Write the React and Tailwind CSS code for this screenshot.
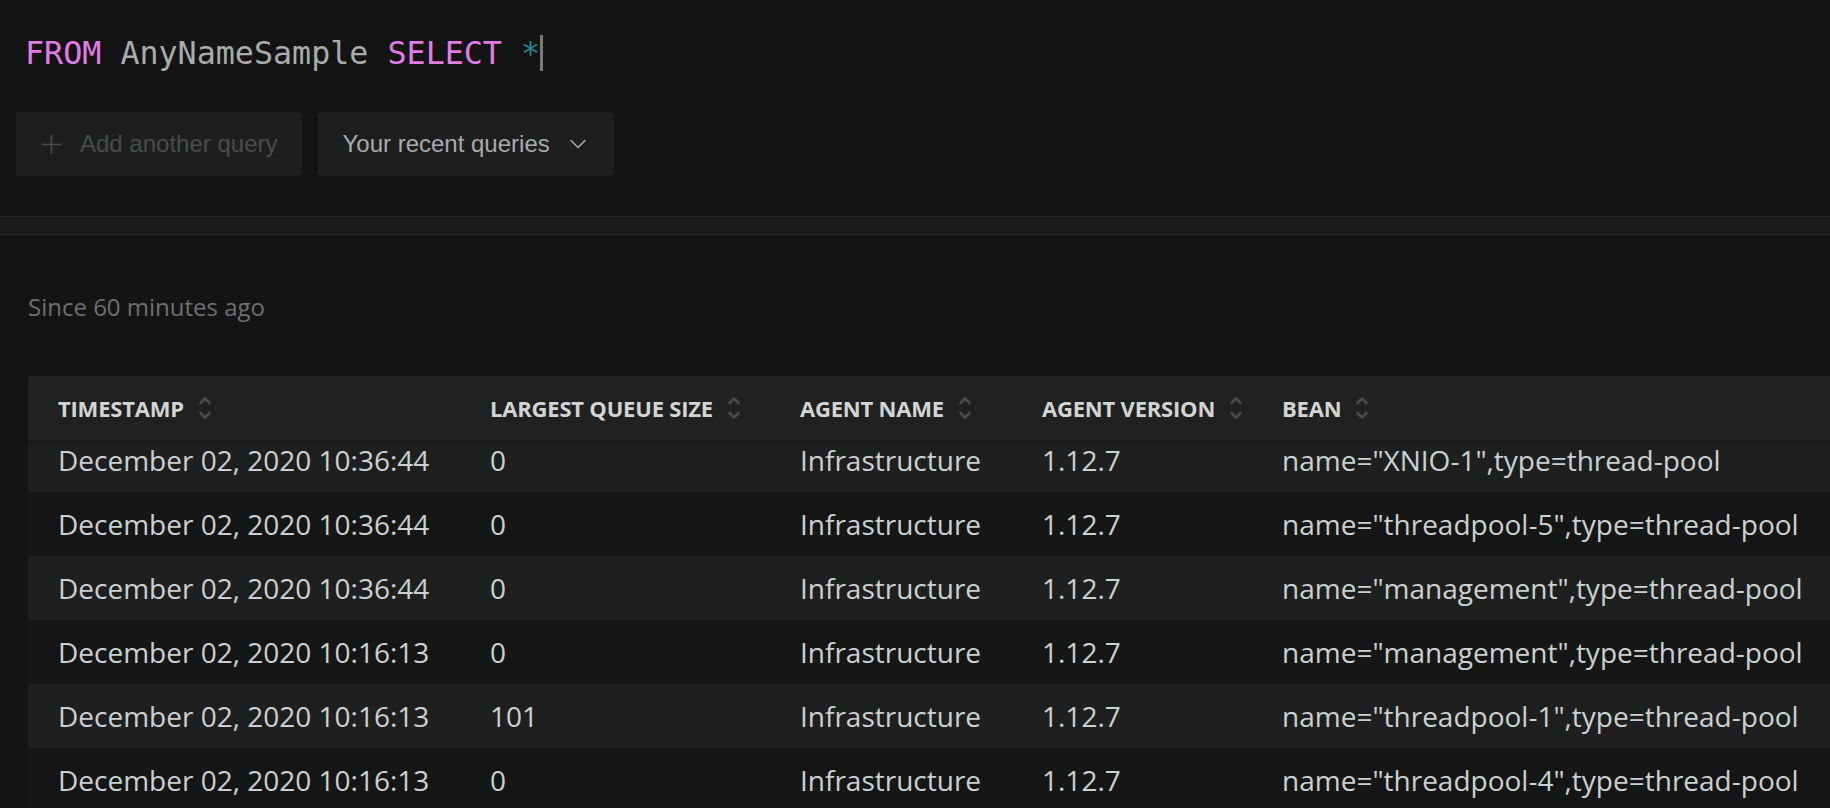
const columns = [
    { label: 'TIMESTAMP', width: 'w-[432px]' },
    { label: 'LARGEST QUEUE SIZE', width: 'w-[310px]' },
    { label: 'AGENT NAME', width: 'w-[242px]' },
    { label: 'AGENT VERSION', width: 'w-[240px]' },
    { label: 'BEAN', width: 'flex-1' },
];

const rows = [
    ['December 02, 2020 10:36:44', '0', 'Infrastructure', '1.12.7', 'name="XNIO-1",type=thread-pool'],
    ['December 02, 2020 10:36:44', '0', 'Infrastructure', '1.12.7', 'name="threadpool-5",type=thread-pool'],
    ['December 02, 2020 10:36:44', '0', 'Infrastructure', '1.12.7', 'name="management",type=thread-pool'],
    ['December 02, 2020 10:16:13', '0', 'Infrastructure', '1.12.7', 'name="management",type=thread-pool'],
    ['December 02, 2020 10:16:13', '101', 'Infrastructure', '1.12.7', 'name="threadpool-1",type=thread-pool'],
    ['December 02, 2020 10:16:13', '0', 'Infrastructure', '1.12.7', 'name="threadpool-4",type=thread-pool'],
];

function SortIcon() {
    return (
        <svg width="14" height="28" viewBox="0 0 14 28" fill="none" stroke="#4a4b4b" strokeWidth="2.6" strokeLinecap="round" strokeLinejoin="round" className="ml-[14px] shrink-0">
            <path d="M2.5 9 L7 4.5 L11.5 9" />
            <path d="M2.5 19 L7 23.5 L11.5 19" />
        </svg>
    );
}

export default function App() {
    return (
        <div className="h-[808px] w-[1830px] overflow-hidden bg-[#141414]" style={{ fontFamily: '"Open Sans", sans-serif' }}>

            {/* Query editor */}
            <div className="pt-[35px] pl-[25px]">
                <div className="flex items-center h-[36px] text-[31.7px] leading-[36px] whitespace-pre" style={{ fontFamily: '"DejaVu Sans Mono", monospace' }}>
                    <span className="text-[#e07de3]">FROM</span>
                    <span className="text-[#a9acac]"> AnyNameSample </span>
                    <span className="text-[#e07de3]">SELECT</span>
                    <span className="text-[#26878d]"> *</span>
                    <span className="inline-block w-[3px] h-[36px] bg-[#7a7a7a]" />
                </div>
            </div>

            {/* Query actions */}
            <div className="flex gap-[16px] pl-[16px] mt-[41px]" style={{ fontFamily: '"Liberation Sans", Arial, sans-serif' }}>
                <button className="flex items-center h-[64px] pl-[26px] pr-[25px] rounded-[4px] bg-[#1d1f1f] text-[24px] text-[#4a4c4c]">
                    <svg width="19" height="19" viewBox="0 0 19 19" fill="none" stroke="#4a4c4c" strokeWidth="1.6" className="mr-[19px]">
                        <path d="M9.5 0 V19 M0 9.5 H19" />
                    </svg>
                    <span>Add another query</span>
                </button>
                <button className="flex items-center h-[64px] pl-[24px] pr-[28px] rounded-[4px] bg-[#1d1f1f] text-[24px] text-[#a9abab]">
                    <span>Your recent queries</span>
                    <svg width="16" height="10" viewBox="0 0 16 10" fill="none" stroke="#a9abab" strokeWidth="1.6" strokeLinecap="round" strokeLinejoin="round" className="ml-[20px]">
                        <path d="M1 1.5 L8 8.5 L15 1.5" />
                    </svg>
                </button>
            </div>

            {/* Divider band */}
            <div className="mt-[40px] h-[19px] border-y border-[#272828] bg-[#1b1b1b]" />

            {/* Time range */}
            <div className="mt-[56px] pl-[28px] text-[24px] leading-[32px] text-[#6e7070]">
                Since 60 minutes ago
            </div>

            {/* Results table */}
            <div className="mt-[53px] ml-[28px]">
                <div className="relative z-10 flex items-center h-[64px] pl-[30px] bg-[#202121] shadow-[0_2px_4px_rgba(0,0,0,0.35)]">
                    {columns.map((col) => (
                        <div key={col.label} className={`${col.width} flex items-center`}>
                            <span className="text-[22px] font-bold text-[#d3d5d5] tracking-[-0.2px]">{col.label}</span>
                            <SortIcon />
                        </div>
                    ))}
                </div>
                <div className="h-[368px] overflow-hidden">
                    <div className="-mt-[12px]">
                        {rows.map((row, i) => (
                            <div key={i} className={`flex items-center h-[64px] pl-[30px] text-[28px] text-[#cdd0d0] whitespace-nowrap ${i % 2 === 0 ? 'bg-[#1e2020]' : 'bg-[#151616]'}`}>
                                {row.map((cell, j) => (
                                    <div key={j} className={columns[j].width}>{cell}</div>
                                ))}
                            </div>
                        ))}
                    </div>
                </div>
            </div>
        </div>
    );
}
